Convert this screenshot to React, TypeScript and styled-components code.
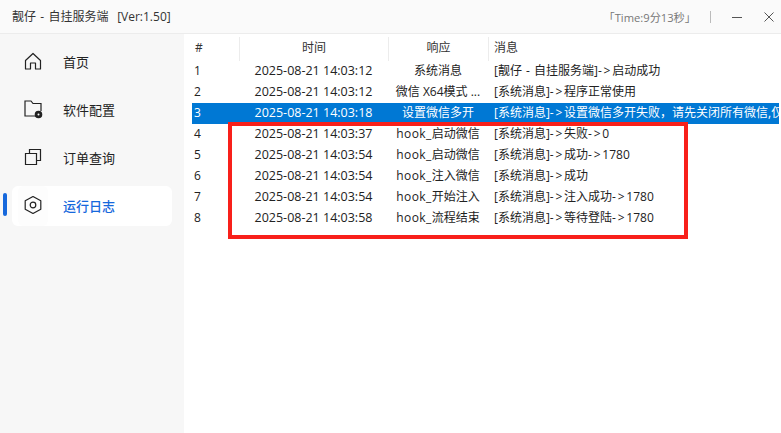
import React from 'react';
import styled, { createGlobalStyle } from 'styled-components';

const GlobalStyle = createGlobalStyle`
  html, body { margin: 0; padding: 0; background: #fff; }
  body { font-family: "Open Sans", "Noto Sans CJK SC", sans-serif; overflow: hidden; }
`;

const Window = styled.div`
  position: relative;
  width: 781px;
  height: 433px;
  display: flex;
  flex-direction: column;
  overflow: hidden;
`;

const TitleBar = styled.div`
  height: 33px;
  flex: none;
  display: flex;
  align-items: center;
  padding: 0 6px 0 12px;
  background: #fafafa;
  border-bottom: 1px solid #ececec;
  color: #333;
  font-size: 12px;
`;

const AppTitle = styled.span`
  flex: 1;
  white-space: pre;
  word-spacing: 1.2px;
  margin-top: -2px;
`;

const Timer = styled.span`
  color: #777;
  font-size: 11.2px;
  margin-right: 14px;
`;

const TitleDivider = styled.span`
  width: 1px;
  height: 12px;
  background: #bbb;
  margin-right: 20px;
`;

const WinButton = styled.svg`
  width: 12px;
  height: 12px;
  margin-right: 20px;
  &:last-child { margin-right: 0; }
`;

const Body = styled.div`
  flex: 1;
  display: flex;
  min-height: 0;
`;

const Sidebar = styled.nav`
  width: 184px;
  flex: none;
  background: #f7f7f7;
  padding: 8px 0 0 12px;
  box-sizing: border-box;
  display: flex;
  flex-direction: column;
  gap: 8px;
`;

const NavItem = styled.div<{ $active?: boolean }>`
  position: relative;
  width: 160px;
  height: 40px;
  display: flex;
  align-items: center;
  border-radius: 6px;
  background: ${(p) => (p.$active ? '#fff' : 'transparent')};
  color: ${(p) => (p.$active ? '#1668dc' : '#222')};
  font-size: 13px;
  font-weight: ${(p) => (p.$active ? 500 : 400)};
`;

const NavLabel = styled.span`
  margin-top: -2px;
`;

const Indicator = styled.span`
  position: absolute;
  left: -9px;
  top: 7px;
  width: 4px;
  height: 23px;
  border-radius: 2px;
  background: #1668dc;
`;

const IconCell = styled.span<{ $tint?: boolean }>`
  width: 30px;
  height: 40px;
  box-sizing: border-box;
  padding-bottom: 2px;
  margin-left: 6px;
  margin-right: 15px;
  display: flex;
  align-items: center;
  justify-content: center;
  border-radius: 6px;
  background: ${(p) => (p.$tint ? '#fdfdfd' : 'transparent')};
`;

const Icon = styled.svg`
  width: 20px;
  height: 20px;
  fill: none;
  stroke: #222;
  stroke-width: 1.2;
`;

const Content = styled.main`
  flex: 1;
  padding: 3px 2px 0 8px;
  min-width: 0;
`;

const Grid = `
  display: grid;
  grid-template-columns: 47px 149px 100px 1fr;
`;

const HeaderRow = styled.div`
  ${Grid}
  height: 24px;
  color: #333;
  font-size: 12px;
`;

const HeaderCell = styled.div<{ $center?: boolean; $pad?: number; $first?: boolean }>`
  height: 24px;
  line-height: 22px;
  box-sizing: border-box;
  border-left: ${(p) => (p.$first ? 'none' : '1px solid #ececec')};
  padding-left: ${(p) => p.$pad ?? 0}px;
  text-align: ${(p) => (p.$center ? 'center' : 'left')};
`;

const Row = styled.div<{ $selected?: boolean }>`
  ${Grid}
  height: 21px;
  line-height: 19px;
  font-size: 12px;
  background: ${(p) => (p.$selected ? '#0078d4' : 'transparent')};
  color: ${(p) => (p.$selected ? '#fff' : '#222')};
`;

const Cell = styled.div<{ $center?: boolean; $pad?: number }>`
  white-space: nowrap;
  overflow: hidden;
  padding-left: ${(p) => p.$pad ?? 0}px;
  text-align: ${(p) => (p.$center ? 'center' : 'left')};
`;

const TimeCell = styled(Cell)`
  font-size: 12.5px;
`;

const MessageCell = styled(Cell)`
  word-spacing: 1px;
`;

const HookPrefix = styled.span`
  letter-spacing: 0.4px;
`;

const Arrow = styled.span`
  letter-spacing: 1.75px;
`;

const Annotation = styled.div`
  position: absolute;
  left: 228px;
  top: 122px;
  width: 460px;
  height: 117px;
  box-sizing: border-box;
  border: 4px solid #f8201a;
  pointer-events: none;
`;

const rows = [
  ['1', '2025-08-21 14:03:12', '系统消息', '[靓仔 - 自挂服务端]->启动成功'],
  ['2', '2025-08-21 14:03:12', '微信 X64模式 ...', '[系统消息]->程序正常使用'],
  ['3', '2025-08-21 14:03:18', '设置微信多开', '[系统消息]->设置微信多开失败，请先关闭所有微信,仅保留一个'],
  ['4', '2025-08-21 14:03:37', 'hook_启动微信', '[系统消息]->失败->0'],
  ['5', '2025-08-21 14:03:54', 'hook_启动微信', '[系统消息]->成功->1780'],
  ['6', '2025-08-21 14:03:54', 'hook_注入微信', '[系统消息]->成功'],
  ['7', '2025-08-21 14:03:54', 'hook_开始注入', '[系统消息]->注入成功->1780'],
  ['8', '2025-08-21 14:03:58', 'hook_流程结束', '[系统消息]->等待登陆->1780'],
];

const renderResponse = (text: string) =>
  text.startsWith('hook_') ? (
    <>
      <HookPrefix>hook_</HookPrefix>
      {text.slice(5)}
    </>
  ) : (
    text
  );

const renderMessage = (text: string) =>
  text.split('->').map((part, i) => (
    <React.Fragment key={i}>
      {i > 0 && <Arrow>{'->'}</Arrow>}
      {part}
    </React.Fragment>
  ));

export default function App() {
  return (
    <Window>
      <GlobalStyle />
      <TitleBar>
        <AppTitle>靓仔 - 自挂服务端  [Ver:1.50]</AppTitle>
        <Timer>「Time:9分13秒」</Timer>
        <TitleDivider />
        <WinButton viewBox="0 0 12 12">
          <path d="M1 6.5h10" stroke="#555" strokeWidth="1" />
        </WinButton>
        <WinButton viewBox="0 0 12 12">
          <path d="M1.5 1.5l9 9M10.5 1.5l-9 9" stroke="#555" strokeWidth="1" />
        </WinButton>
      </TitleBar>
      <Body>
        <Sidebar>
          <NavItem>
            <IconCell>
              <Icon viewBox="0 0 20 20">
                <path d="M2.5 9.5L10 2.5l7.5 7V18h-5v-6h-5v6h-5z" strokeLinejoin="round" />
              </Icon>
            </IconCell>
            <NavLabel>首页</NavLabel>
          </NavItem>
          <NavItem>
            <IconCell>
              <Icon viewBox="0 0 20 20">
                <path d="M13 17H2V2h6l2 2.5h8V12" />
                <circle cx="15.5" cy="15.5" r="3.2" fill="#222" />
                <circle cx="15.5" cy="15.5" r="1" fill="#fff" stroke="none" />
              </Icon>
            </IconCell>
            <NavLabel>软件配置</NavLabel>
          </NavItem>
          <NavItem>
            <IconCell>
              <Icon viewBox="0 0 20 20">
                <path d="M2.5 6.5h11v11h-11z" />
                <path d="M6.5 6.5v-4h11v11h-4" />
              </Icon>
            </IconCell>
            <NavLabel>订单查询</NavLabel>
          </NavItem>
          <NavItem $active>
            <Indicator />
            <IconCell $tint>
              <Icon viewBox="0 0 20 20">
                <path d="M10 1.5l7.8 4.3v8.4L10 18.5l-7.8-4.3V5.8z" strokeLinejoin="round" />
                <circle cx="10" cy="10" r="2.8" />
              </Icon>
            </IconCell>
            <NavLabel>运行日志</NavLabel>
          </NavItem>
        </Sidebar>
        <Content>
          <HeaderRow>
            <HeaderCell $first $pad={3}>#</HeaderCell>
            <HeaderCell $center>时间</HeaderCell>
            <HeaderCell $center>响应</HeaderCell>
            <HeaderCell $pad={5}>消息</HeaderCell>
          </HeaderRow>
          {rows.map((r) => (
            <Row key={r[0]} $selected={r[0] === '3'}>
              <Cell $pad={2}>{r[0]}</Cell>
              <TimeCell $center>{r[1]}</TimeCell>
              <Cell $center>{renderResponse(r[2])}</Cell>
              <MessageCell $pad={6}>{renderMessage(r[3])}</MessageCell>
            </Row>
          ))}
        </Content>
      </Body>
      <Annotation />
    </Window>
  );
}
